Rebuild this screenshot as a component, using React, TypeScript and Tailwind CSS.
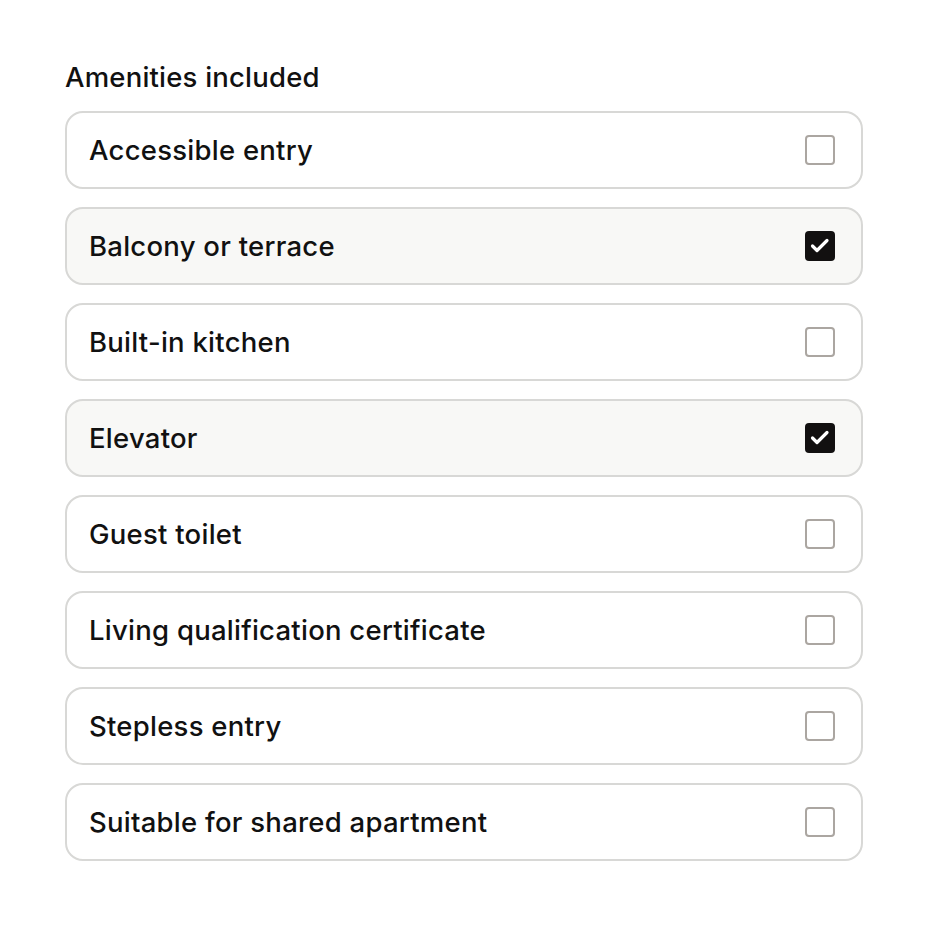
import { useState } from "react";

const AMENITIES: { label: string; checked: boolean }[] = [
  { label: "Accessible entry", checked: false },
  { label: "Balcony or terrace", checked: true },
  { label: "Built-in kitchen", checked: false },
  { label: "Elevator", checked: true },
  { label: "Guest toilet", checked: false },
  { label: "Living qualification certificate", checked: false },
  { label: "Stepless entry", checked: false },
  { label: "Suitable for shared apartment", checked: false },
];

function Box({ checked }: { checked: boolean }) {
  if (checked) {
    return (
      <span className="flex size-[30px] items-center justify-center rounded-[4px] bg-[#121010]">
        <svg viewBox="0 0 30 30" className="size-[30px]" fill="none" aria-hidden>
          <path
            d="M7.5 15l4.5 4.5 10-10"
            stroke="white"
            strokeWidth="3.2"
            strokeLinecap="round"
            strokeLinejoin="round"
          />
        </svg>
      </span>
    );
  }
  return <span className="size-[30px] rounded-[4px] border-[2.5px] border-[#aba6a1] bg-white" />;
}

export default function App() {
  const [items, setItems] = useState(AMENITIES);

  return (
    <div className="min-h-screen bg-white px-[65px] pt-[58px] font-['Inter',sans-serif] text-[#111]">
      <p className="mb-[15px] text-[27.5px] font-medium leading-[38px] tracking-[0.2px]">
        Amenities included
      </p>
      <div className="flex w-[798px] flex-col gap-[18px]">
        {items.map((item, i) => (
          <label
            key={item.label}
            className={`flex h-[78px] cursor-pointer items-center justify-between rounded-[18px] border-2 border-[#d8d8d6] pl-[22px] pr-[26px] ${
              item.checked ? "bg-[#f8f8f6]" : "bg-white"
            }`}
            onClick={() =>
              setItems((prev) =>
                prev.map((p, j) => (j === i ? { ...p, checked: !p.checked } : p))
              )
            }
          >
            <span className="text-[27.5px] font-medium leading-[38px] tracking-[0.25px]">
              {item.label}
            </span>
            <Box checked={item.checked} />
          </label>
        ))}
      </div>
    </div>
  );
}
